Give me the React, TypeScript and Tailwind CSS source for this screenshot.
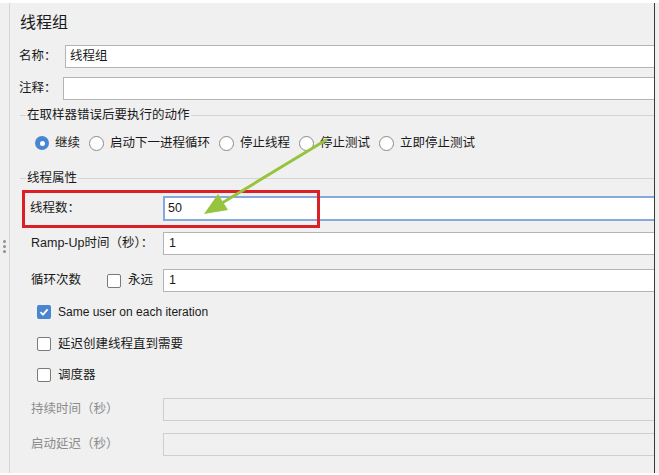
import React from 'react';

const FONT = '"Liberation Sans", "Noto Sans CJK SC", sans-serif';

function Radio({ checked, label }: { checked?: boolean; label: string }) {
  return (
    <div className="flex items-center">
      {checked ? (
        <span className="w-[14px] h-[14px] rounded-full bg-[#4a86d0] flex items-center justify-center">
          <span className="w-[5px] h-[5px] rounded-full bg-white" />
        </span>
      ) : (
        <span className="w-[15px] h-[15px] rounded-full bg-white border border-[#8a8a8a]" />
      )}
      <span className="ml-[6px] text-[12.5px] text-[#1a1a1a]">{label}</span>
    </div>
  );
}

function Checkbox({ checked, label, latin }: { checked?: boolean; label: string; latin?: boolean }) {
  return (
    <div className="flex items-center h-[20px]">
      {checked ? (
        <span className="w-[14px] h-[14px] rounded-[2px] bg-[#4a86d0] flex items-center justify-center">
          <svg width="10" height="10" viewBox="0 0 10 10">
            <path d="M1.5 5.2 L4 7.6 L8.6 2.4" stroke="white" strokeWidth="1.8" fill="none" />
          </svg>
        </span>
      ) : (
        <span className="w-[14px] h-[14px] rounded-[2px] bg-white border border-[#7a7a7a]" />
      )}
      <span className={`ml-[7px] text-[#1a1a1a] ${latin ? 'text-[12px]' : 'text-[12.5px]'}`}>{label}</span>
    </div>
  );
}

function Legend({ text }: { text: string }) {
  return (
    <div className="flex items-center h-[18px] pl-[10px]">
      <span className="w-[6px] h-px bg-[#d4d4d4]" />
      <span className="px-[1px] text-[12.5px] text-[#1a1a1a]">{text}</span>
      <span className="flex-1 h-px bg-[#d4d4d4]" />
    </div>
  );
}

function Field({
  label,
  value,
  disabled,
  extra,
}: {
  label: string;
  value?: string;
  disabled?: boolean;
  extra?: React.ReactNode;
}) {
  return (
    <div className="flex items-center h-[23px] pl-[21px]">
      <div className="w-[132px] flex items-center">
        <span className={`text-[12.5px] ${disabled ? 'text-[#8c8c8c]' : 'text-[#1a1a1a]'}`}>{label}</span>
        {extra}
      </div>
      <div
        className={`flex-1 h-[23px] border-y border-l flex items-center pl-[5px] text-[12.5px] text-[#1a1a1a] ${
          disabled ? 'bg-[#f0f0f0] border-[#cfcfcf]' : 'bg-white border-[#b4b4b4]'
        }`}
      >
        {value}
      </div>
    </div>
  );
}

export default function App() {
  return (
    <div className="w-[659px] h-[475px] bg-white relative overflow-hidden" style={{ fontFamily: FONT }}>
      <div className="flex h-[470px] mt-[3px] bg-[#f0f0f0]">
        <div className="w-[9px] flex flex-col items-center justify-center gap-[2px]">
          <span className="w-[3px] h-[3px] rounded-full bg-[#909090] mt-[16px]" />
          <span className="w-[3px] h-[3px] rounded-full bg-[#909090]" />
          <span className="w-[3px] h-[3px] rounded-full bg-[#909090]" />
        </div>
        <div className="w-[646px] border-l border-[#d6d6d6] border-r border-r-[#3a3a3a] flex flex-col">
          <div className="pl-[10px] pt-[10px] h-[31px] text-[16px] leading-[20px] text-[#1a1a1a]">线程组</div>

          <div className="flex items-center mt-[11px] h-[23px] pl-[9px]">
            <span className="w-[46px] text-[12.5px] text-[#1a1a1a]">名称：</span>
            <div className="flex-1 h-[23px] bg-white border-y border-l border-[#b4b4b4] flex items-center pl-[4px] text-[12.5px] text-[#1a1a1a]">
              线程组
            </div>
          </div>
          <div className="flex items-center mt-[9px] h-[23px] pl-[9px]">
            <span className="w-[44px] text-[12.5px] text-[#1a1a1a]">注释：</span>
            <div className="flex-1 h-[23px] bg-white border-y border-l border-[#b4b4b4]" />
          </div>

          <div className="mt-[6px]">
            <Legend text="在取样器错误后要执行的动作" />
          </div>
          <div className="flex items-center h-[20px] mt-[9px] pl-[25px] gap-[9px]">
            <Radio checked label="继续" />
            <Radio label="启动下一进程循环" />
            <Radio label="停止线程" />
            <Radio label="停止测试" />
            <Radio label="立即停止测试" />
          </div>

          <div className="mt-[16px]">
            <Legend text="线程属性" />
          </div>

          <div className="flex items-center h-[25px] mt-[9px] pl-[20px]">
            <span className="w-[133px] text-[12.5px] text-[#1a1a1a]">线程数：</span>
            <div className="flex-1 h-[25px] bg-white border-y-2 border-l-2 border-[#86a9dc] flex items-center pl-[3px] text-[12.5px] text-[#1a1a1a]">
              50
            </div>
          </div>

          <div className="mt-[11px]">
            <Field label="Ramp-Up时间（秒）：" value="1" />
          </div>
          <div className="mt-[14px]">
            <Field
              label="循环次数"
              value="1"
              extra={
                <div className="ml-[26px]">
                  <Checkbox label="永远" />
                </div>
              }
            />
          </div>

          <div className="mt-[10px] pl-[27px]">
            <Checkbox checked latin label="Same user on each iteration" />
          </div>
          <div className="mt-[12px] pl-[27px]">
            <Checkbox label="延迟创建线程直到需要" />
          </div>
          <div className="mt-[11px] pl-[27px]">
            <Checkbox label="调度器" />
          </div>

          <div className="mt-[13px]">
            <Field label="持续时间（秒）" disabled />
          </div>
          <div className="mt-[12px]">
            <Field label="启动延迟（秒）" disabled />
          </div>
        </div>
      </div>

      {/* annotation: red box */}
      <div className="absolute left-[22px] top-[190px] w-[298px] h-[38px] border-[3px] border-[#dc1f26]" />

      {/* annotation: green arrow */}
      <svg className="absolute left-0 top-0" width="659" height="475">
        <line x1="326" y1="140" x2="222" y2="203" stroke="#96c43f" strokeWidth="3" strokeLinecap="round" />
        <polygon points="204,214 218,194 228,210" fill="#96c43f" />
      </svg>
    </div>
  );
}
